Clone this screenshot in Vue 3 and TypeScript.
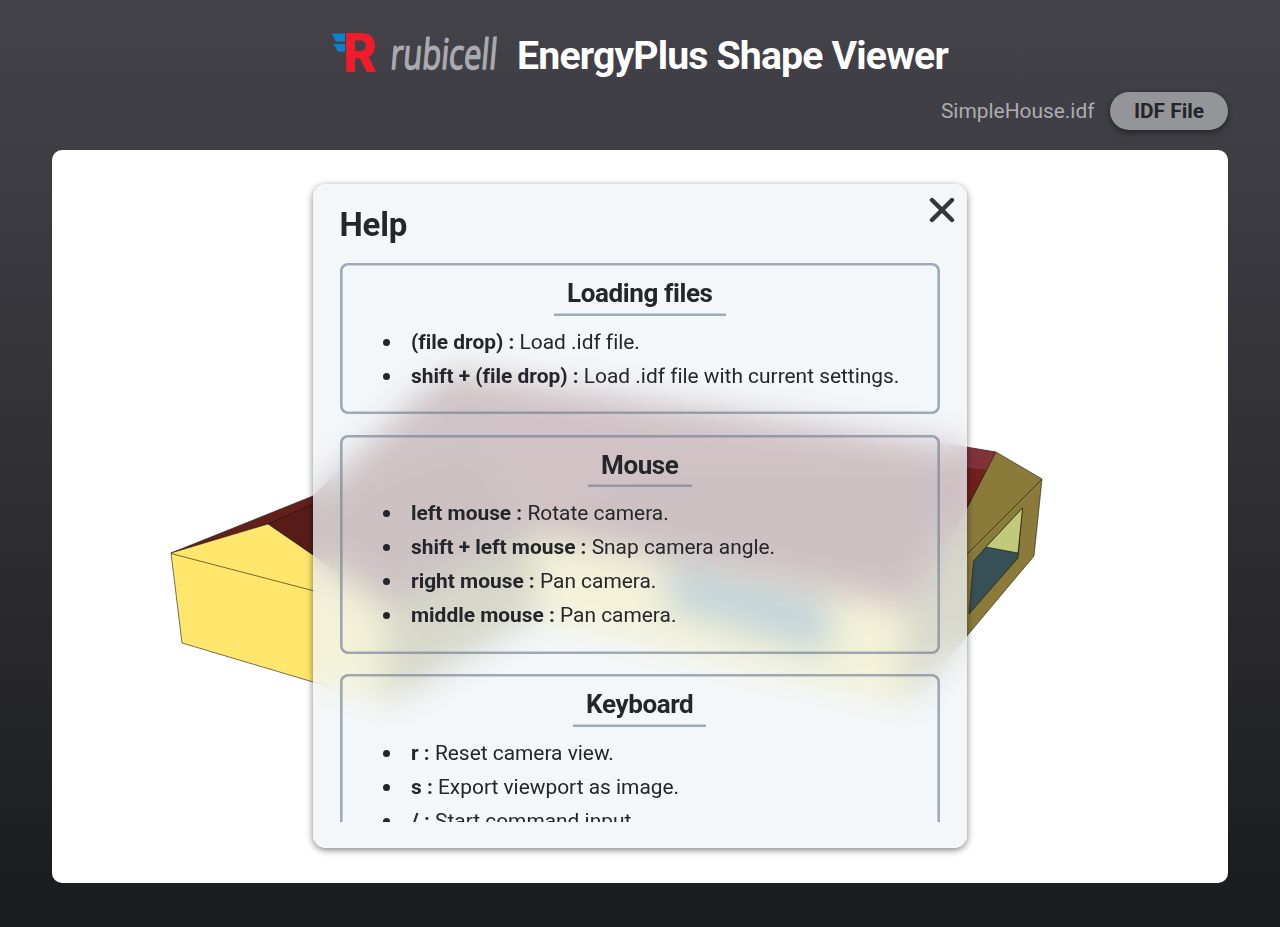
<script setup lang="ts">
interface Entry { keys: string; text: string }
interface Section { title: string; entries: Entry[] }

const sections: Section[] = [
  {
    title: 'Loading files',
    entries: [
      { keys: '(file drop) :', text: 'Load .idf file.' },
      { keys: 'shift + (file drop) :', text: 'Load .idf file with current settings.' },
    ],
  },
  {
    title: 'Mouse',
    entries: [
      { keys: 'left mouse :', text: 'Rotate camera.' },
      { keys: 'shift + left mouse :', text: 'Snap camera angle.' },
      { keys: 'right mouse :', text: 'Pan camera.' },
      { keys: 'middle mouse :', text: 'Pan camera.' },
    ],
  },
  {
    title: 'Keyboard',
    entries: [
      { keys: 'r :', text: 'Reset camera view.' },
      { keys: 's :', text: 'Export viewport as image.' },
      { keys: '/ :', text: 'Start command input.' },
    ],
  },
]
</script>

<template>
  <div class="app">
    <header class="header">
      <svg class="logo" width="172" height="60" viewBox="0 0 172 60">
        <path d="M-0.5 5.5H13V13.5H4Z M1.5 16H13V23.5H6Z" fill="#0a83cd" />
        <text class="logo-r" x="11.2" y="44.2" textLength="34" lengthAdjust="spacingAndGlyphs">R</text>
        <text class="logo-word" transform="translate(57.5 40.5) skewX(-5) scale(1 1.2)" x="0" y="0" textLength="106.5" lengthAdjust="spacingAndGlyphs">rubicell</text>
      </svg>
      <h1 class="title">EnergyPlus Shape Viewer</h1>
    </header>

    <div class="toolbar">
      <span class="filename">SimpleHouse.idf</span>
      <button class="file-button">IDF File</button>
    </div>

    <main class="viewport">
      <svg class="scene" viewBox="52 150 1176 733" width="1176" height="733">
        <g stroke="#1c1508" stroke-opacity="0.6" stroke-width="1" stroke-linejoin="round">
          <polygon points="171,553 313,496 425,390 450,371 534,420 534,535 387,606 268,524" fill="#63201b" />
          <polygon points="268,524 313,504 400,470 534,430 534,532 387,606" fill="#571c17" />
          <polygon points="450,371 966,447 996,452 966,510 907,606 534,532 480,440" fill="#6c1f1c" />
          <polygon points="640,468 966,467 988,469 966,510 907,606 534,532" fill="#5e1618" stroke="none" />
          <polygon points="966,447 996,452 987,470 966,468" fill="#7f3339" stroke="none" />
          <polygon points="960,467 987,470 966,508 950,520" fill="#70201d" stroke="none" />
          <polygon points="171,553 268,524 387,606 387,703 313,682 182,643" fill="#ffe76d" />
          <path d="M171 553.5 387 610" fill="none" />
          <polygon points="387,606 534,532 534,618 387,703" fill="#857a33" />
          <polygon points="534,532 907,606 907,705 534,618" fill="#ffe76d" />
          <polygon points="668,565 831,603 827,655 668,608" fill="#336a78" />
          <polygon points="996,452 1042,479 1034,556 966,637 907,705 907,610 966,510" fill="#8a7b3b" />
          <path d="M1042 479 907 614" fill="none" />
          <polygon points="1022.5,508 1018,558 969,614 973.5,561 986,547" fill="#375055" />
          <polygon points="1022.5,508 1018,553 986,547" fill="#c1c97a" />
        </g>
      </svg>

      <section class="dialog">
        <svg class="close" width="26" height="26" viewBox="0 0 26 26">
          <path d="M3 3 23 23M23 3 3 23" stroke="#353639" stroke-width="4.4" stroke-linecap="round" />
        </svg>
        <h2 class="dialog-title">Help</h2>
        <div class="scroll">
          <article v-for="s in sections" :key="s.title" class="card">
            <h3 class="card-title">{{ s.title }}</h3>
            <ul class="list">
              <li v-for="e in s.entries" :key="e.keys"><b>{{ e.keys }}</b> {{ e.text }}</li>
            </ul>
          </article>
        </div>
      </section>
    </main>
  </div>
</template>

<style>
body { margin: 0; overflow: hidden; }
</style>

<style scoped>
.app {
  box-sizing: border-box;
  height: 927px;
  padding: 0 52px;
  display: flex;
  flex-direction: column;
  font-family: Roboto, "Liberation Sans", sans-serif;
  font-variant-ligatures: none;
  background: linear-gradient(#434248 0%, #3f3e44 14%, #1a1b1f 100%);
  color: #25262b;
}
.header {
  height: 92px;
  padding-top: 28px;
  box-sizing: border-box;
  display: flex;
  justify-content: center;
  gap: 14px;
}
.logo { flex: none; overflow: visible; }
.logo-r { font: 800 53.5px Inter, sans-serif; fill: #f01c2c; }
.logo-word {
  font: 400 35px "Open Sans", sans-serif;
  fill: #a9abaf;
  stroke: #a9abaf;
  stroke-width: 1.2;
  stroke-linejoin: round;
}
.title {
  margin: 0 0 0 -1px;
  color: #fff;
  font-size: 39.2px;
  line-height: 56px;
  font-weight: 700;
  letter-spacing: -0.84px;
  white-space: nowrap;
}
.toolbar { height: 38px; display: flex; justify-content: flex-end; align-items: center; gap: 15.5px; }
.filename { color: #acacb1; font-size: 20.9px; }
.file-button {
  width: 118px;
  height: 38px;
  padding: 0;
  border: 0;
  border-radius: 19px;
  background: #939598;
  color: #25262b;
  font: 700 20.9px Roboto, sans-serif;
  box-shadow: 0 2px 6px rgba(0, 0, 0, 0.5);
}
.viewport {
  position: relative;
  margin-top: 20px;
  height: 733px;
  border-radius: 10px;
  background: #fff;
  overflow: hidden;
}
.scene { display: block; }
.dialog {
  position: absolute;
  left: 261px;
  top: 34px;
  width: 654px;
  height: 664px;
  box-sizing: border-box;
  padding: 0 27px 26px 26.5px;
  border-radius: 13px;
  display: flex;
  flex-direction: column;
  background: rgba(239, 244, 249, 0.77);
  backdrop-filter: blur(17px);
  box-shadow: 0 2px 7px rgba(0, 0, 0, 0.5);
}
.close { position: absolute; top: 12.5px; right: 12.5px; }
.dialog-title { margin: 21px 0 18px; font-size: 33px; line-height: 40px; font-weight: 700; letter-spacing: -0.2px; }
.scroll { flex: 1; min-height: 0; overflow: hidden; }
.card {
  box-sizing: border-box;
  padding: 13px 0 21.5px;
  margin-bottom: 20.5px;
  border-radius: 8px;
  box-shadow: inset 0 0 0 2.6px rgba(112, 128, 148, 0.65);
  display: flex;
  flex-direction: column;
  align-items: center;
}
.card-title {
  margin: 0 0 9.4px;
  padding: 0 13px 5px;
  height: 34.5px;
  font-size: 26px;
  line-height: 34px;
  font-weight: 700;
  letter-spacing: -0.38px;
  box-shadow: inset 0 -2.6px 0 rgba(112, 128, 148, 0.65);
}
.card:nth-child(n + 2) { margin-top: -0.4px; }
.list {
  align-self: stretch;
  margin: 0;
  padding: 0 0 0 43px;
  list-style: none;
  font-size: 20.9px;
  line-height: 34px;
  white-space: nowrap;
}
.list li::before {
  content: "";
  display: inline-block;
  width: 7px;
  height: 7px;
  margin-right: 21.5px;
  border-radius: 50%;
  background: #25262b;
  vertical-align: 3px;
}
</style>
